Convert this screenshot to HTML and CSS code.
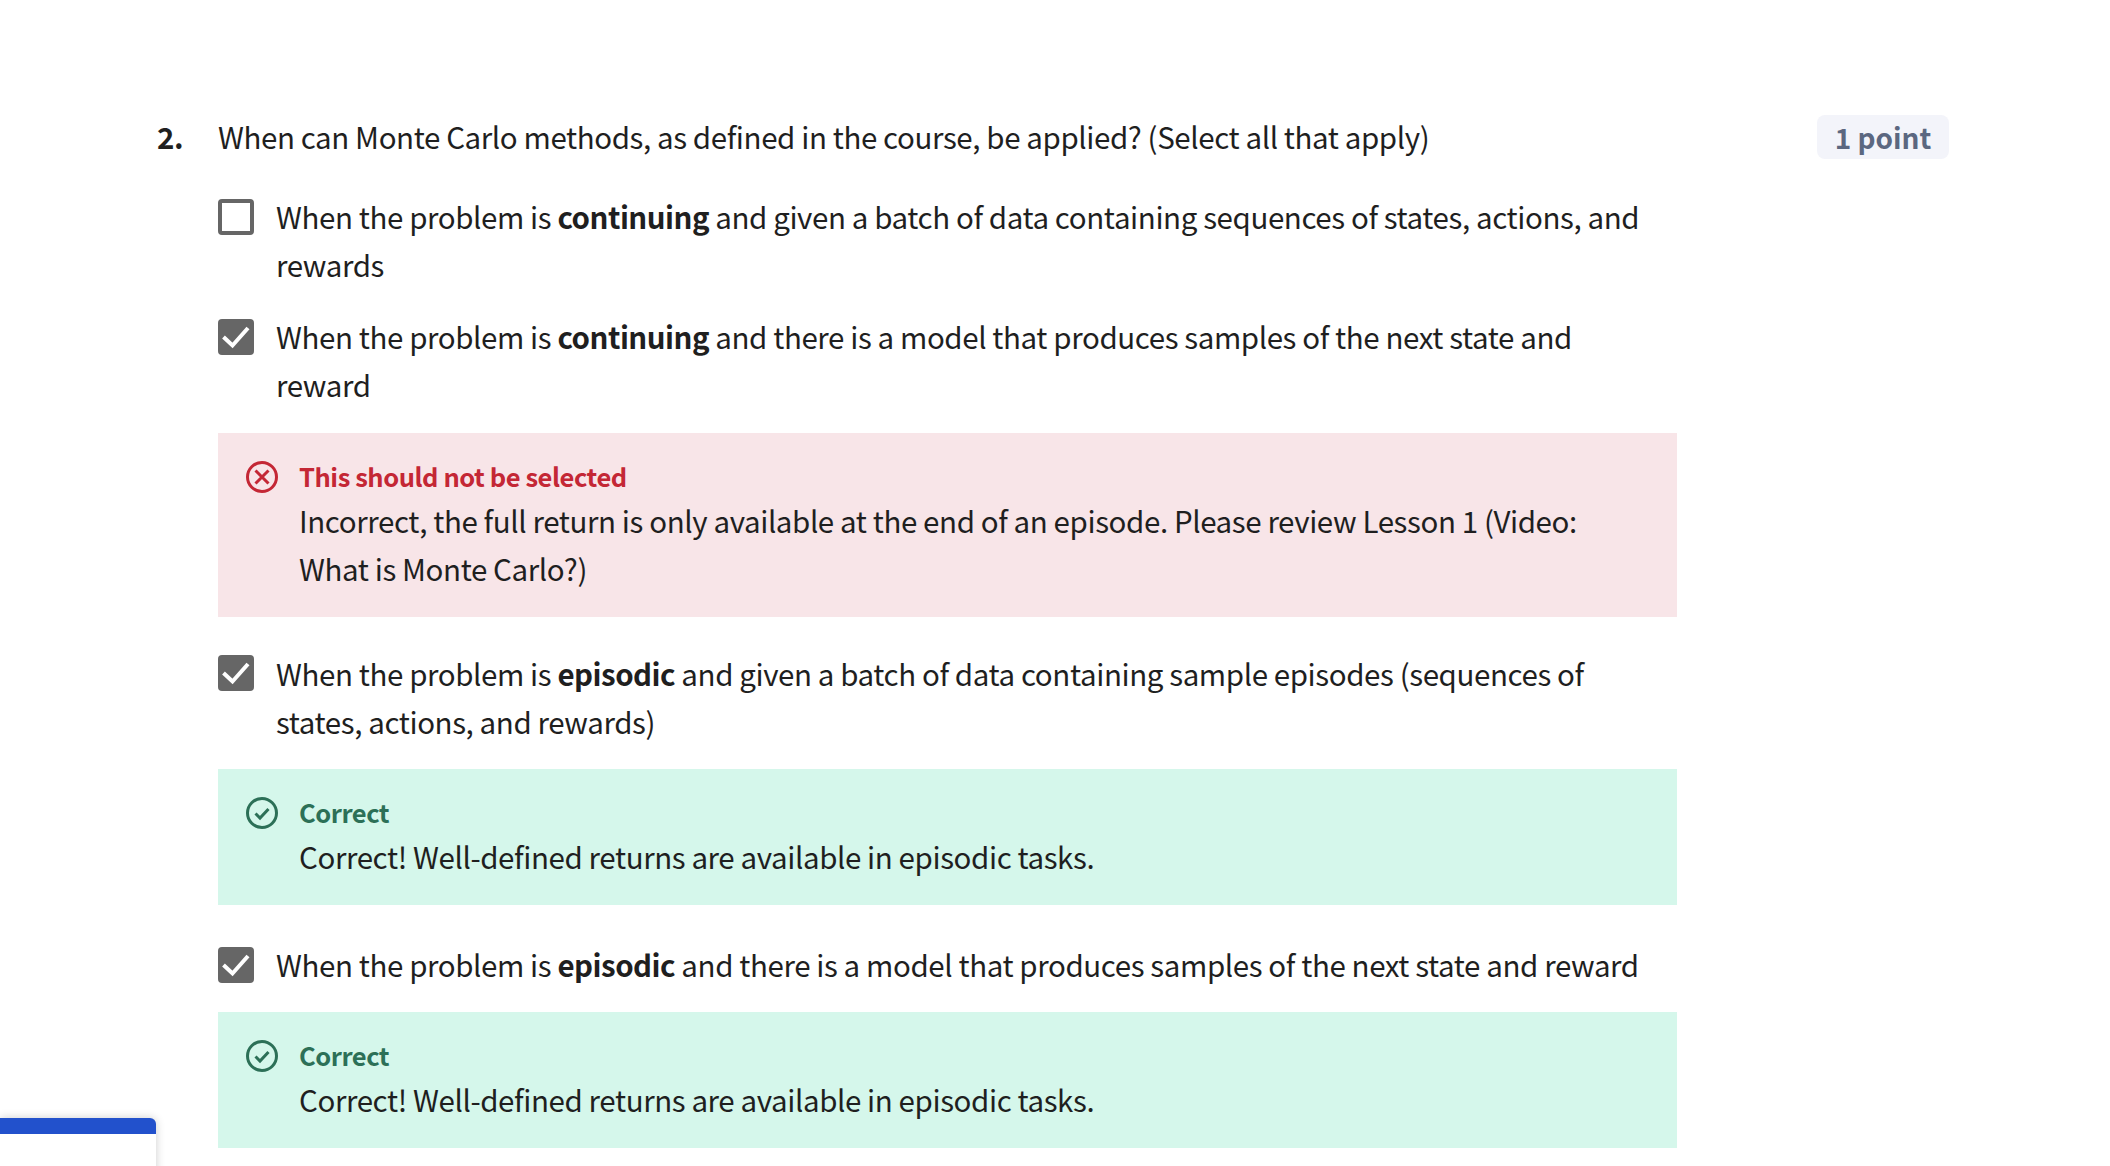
FILE: index.html
```html
<!DOCTYPE html>
<html lang="en">
  <head>
    <meta charset="UTF-8" />
    <title>Quiz question</title>
    <link rel="stylesheet" href="styles.css">
  </head>
  <body>
    <div class="question">
      <div class="number">2.</div>
      <div class="prompt">When can Monte Carlo methods, as defined in the course, be applied? (Select all that apply)</div>
      <div class="points">1 point</div>

      <div class="answers">
        <div class="option">
          <span class="checkbox"></span>
          <div class="label">When the problem is <b>continuing</b> and given a batch of data containing sequences of states, actions, and rewards</div>
        </div>

        <div class="option">
          <span class="checkbox checked">
            <svg viewBox="0 0 36 36"><path d="M5.500 18l9 8.500L30 9" /></svg>
          </span>
          <div class="label">When the problem is <b>continuing</b> and there is a model that produces samples of the next state and reward</div>
        </div>

        <div class="feedback wrong">
          <svg class="status" viewBox="0 0 32 32"><circle cx="16" cy="16" r="14.500" /><path d="M9.500 9.500l13 13M22.500 9.500l-13 13" /></svg>
          <div class="message">
            <div class="title">This should not be selected</div>
            <div class="text">Incorrect, the full return is only available at the end of an episode. Please review Lesson 1 (Video: What is Monte Carlo?)</div>
          </div>
        </div>

        <div class="option after-feedback">
          <span class="checkbox checked">
            <svg viewBox="0 0 36 36"><path d="M5.500 18l9 8.500L30 9" /></svg>
          </span>
          <div class="label">When the problem is <b>episodic</b> and given a batch of data containing sample episodes (sequences of states, actions, and rewards)</div>
        </div>

        <div class="feedback right">
          <svg class="status" viewBox="0 0 32 32"><circle cx="16" cy="16" r="14.500" /><path d="M9.500 16.500l4.500 4.500 8.500-9" /></svg>
          <div class="message">
            <div class="title">Correct</div>
            <div class="text">Correct! Well-defined returns are available in episodic tasks.</div>
          </div>
        </div>

        <div class="option after-feedback last">
          <span class="checkbox checked">
            <svg viewBox="0 0 36 36"><path d="M5.500 18l9 8.500L30 9" /></svg>
          </span>
          <div class="label">When the problem is <b>episodic</b> and there is a model that produces samples of the next state and reward</div>
        </div>

        <div class="feedback right">
          <svg class="status" viewBox="0 0 32 32"><circle cx="16" cy="16" r="14.500" /><path d="M9.500 16.500l4.500 4.500 8.500-9" /></svg>
          <div class="message">
            <div class="title">Correct</div>
            <div class="text">Correct! Well-defined returns are available in episodic tasks.</div>
          </div>
        </div>
      </div>
    </div>

    <div class="corner-panel"></div>
  </body>
</html>
```

FILE: styles.css
```css
html,
body {
  height: 100%;
}

body {
  margin: 0;
  padding: 112px 161px 0 157px;
  box-sizing: border-box;
  overflow: hidden;
  background-color: #fff;
  color: #1f1f1f;
  font-family: "Noto Sans CJK SC", "Noto Sans", sans-serif;
  font-size: 29.500px;
  letter-spacing: -0.400px;
  line-height: 48px;
}

b {
  letter-spacing: -0.500px;
}

.question {
  display: grid;
  grid-template-columns: 61px 1459px 1fr;
  grid-template-rows: 48px auto;
}

.number {
  font-weight: 700;
}

.points {
  justify-self: end;
  align-self: end;
  height: 44px;
  width: 132px;
  margin-bottom: 1px;
  border-radius: 8px;
  background-color: #f3f4fa;
  color: #5b6780;
  font-size: 28px;
  font-weight: 600;
  letter-spacing: 0;
  line-height: 44px;
  text-align: center;
}

.answers {
  grid-column: 2;
  padding-top: 33px;
}

.option {
  display: flex;
  margin-bottom: 24px;
}

.option.after-feedback {
  margin-top: 33px;
  margin-bottom: 23px;
}

.option.last {
  margin-top: 36px;
}

.checkbox {
  flex: none;
  width: 36px;
  height: 36px;
  margin: 6px 22px 0 0;
  box-sizing: border-box;
  border: 4px solid #666;
  border-radius: 4px;
}

.after-feedback .checkbox {
  margin-top: 5px;
}

.last .checkbox {
  margin-top: 6px;
}

.checkbox.checked {
  border: none;
  background-color: #666;
}

.checkbox svg {
  display: block;
  fill: none;
  stroke: #fff;
  stroke-width: 4;
}

.label {
  width: 1375px;
  margin: -1px 0 1px;
}

.feedback {
  display: flex;
  padding: 24px 28px;
  background-color: #f8e5e8;
}

.feedback.right {
  background-color: #d5f7eb;
}

.status {
  flex: none;
  width: 32px;
  height: 32px;
  margin: 4px 21px 0 0;
  fill: none;
  stroke-width: 3;
  stroke: #c42735;
}

.right .status {
  stroke: #2c7057;
}

.message {
  margin: -1px 0 1px;
}

.title {
  font-size: 25.500px;
  letter-spacing: -0.450px;
  line-height: 40px;
  font-weight: 700;
  color: #c42735;
}

.right .title {
  color: #2c7057;
}

.corner-panel {
  position: fixed;
  left: 0;
  top: 1118px;
  width: 156px;
  height: 60px;
  border-top: 16px solid #2251cc;
  border-radius: 0 6px 0 0;
  background-color: #fff;
  box-shadow: 0 0 10px rgba(0, 0, 0, 0.2);
}
```
